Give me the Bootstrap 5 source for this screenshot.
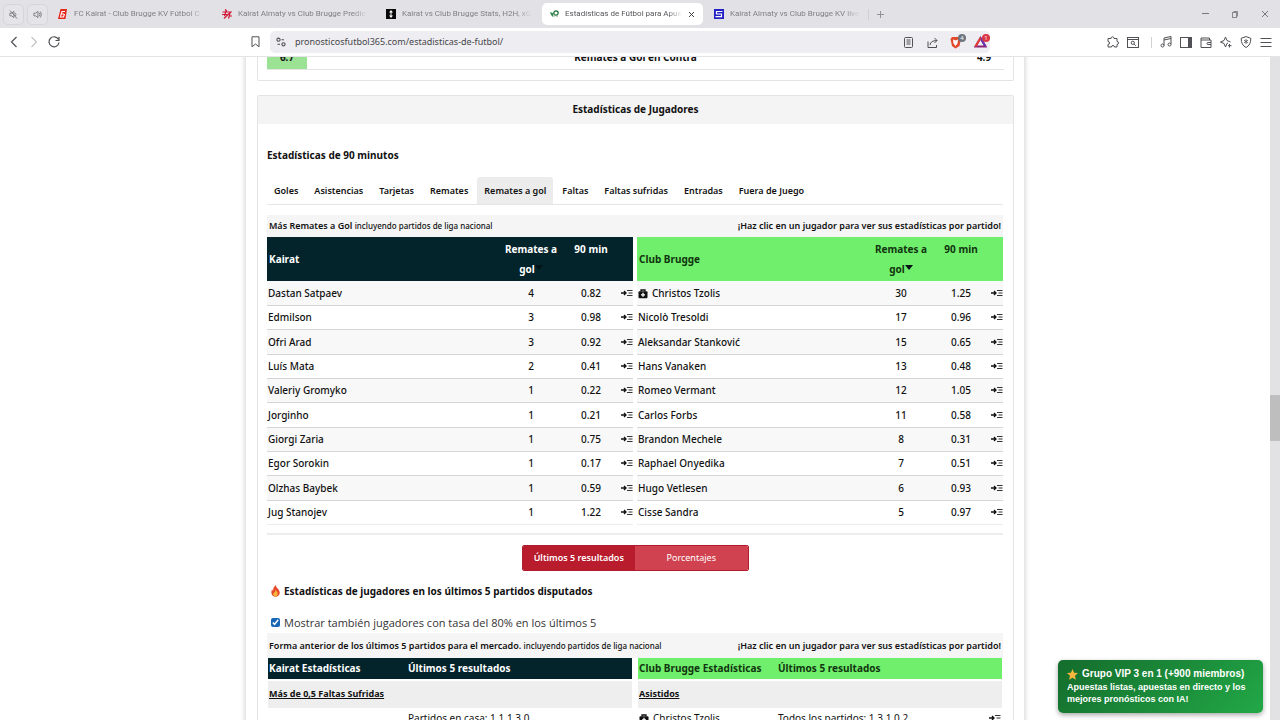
<!DOCTYPE html>
<html lang="es">
<head>
<meta charset="utf-8">
<meta name="viewport" content="width=device-width, initial-scale=1">
<title>Estadísticas de Fútbol para Apuestas</title>
<link href="https://cdn.jsdelivr.net/npm/bootstrap@5.3.0/dist/css/bootstrap.min.css" rel="stylesheet">
<style>
  body { font-family: "Noto Sans", "Open Sans", sans-serif; font-size: 10px; line-height: 20px; color: #111; background: #fff; }
  button { font-family: inherit; }
  svg { display: block; flex: none; }

  /* browser frame */
  .tab-strip { height: 28px; background: #e2e1e6; font-family: Roboto, sans-serif; font-size: 8px; color: #808086; }
  .sound-btn { width: 21px; height: 21px; border: 1px solid #d6d5da; border-radius: 5px; background: #e5e4e8; margin-left: 3px; padding: 0; color: #77777c; }
  .tab-item { width: 164px; padding: 0 8px 0 10px; gap: 6px; height: 22px; color: inherit; text-decoration: none; }
  .tab-item.current { width: 161px; margin: 0 1px 0 2px; padding-left: 8px; background: #fff; border-radius: 5px; color: #55555a; }
  .tab-name { flex: 1; overflow: hidden; white-space: nowrap; -webkit-mask-image: linear-gradient(90deg, #000 88%, transparent); mask-image: linear-gradient(90deg, #000 88%, transparent); }
  .plain { border: 0; background: none; padding: 0; color: inherit; display: flex; align-items: center; justify-content: center; }
  .win-btn { width: 30px; height: 22px; }
  .split { width: 1px; height: 11px; background: #d0cfd4; }
  .tool-row { height: 29px; background: #fff; border-bottom: 1px solid #e4e4e6; color: #505055; }
  .tool-btn { width: 20px; height: 20px; flex: none; }
  .save-btn { margin-left: 181px; margin-right: 5px; }
  .address { height: 22px; background: #eeedf1; border-radius: 5px; padding-left: 2px; min-width: 0; }
  .address input { border: 0; background: none; font-size: 9px; color: #46464b; outline: 0; padding: 0 0 0 5px; min-width: 0; }
  .tool-group { width: 290px; flex: none; }
  .count-dot { position: absolute; top: 2px; right: 0; width: 8px; height: 8px; border-radius: 50%; font-size: 6px; line-height: 8px; color: #fff; }

  /* page */
  .scroller { flex: 1; min-height: 0; }
  .track { width: 10px; background: #e2e2e4; }
  .thumb { height: 46px; margin-top: 338px; background: #bebebe; }
  .shell { width: 100%; max-width: 780px; margin-top: -13px; padding: 0 10px 0 11px; border: solid #e6e6e6; border-width: 0 1px; box-shadow: 0 0 5px rgba(0,0,0,.18); }
  .panel { border: 1px solid #e4e4e4; border-radius: 2px; }
  .summary { padding: 0 9px 10px; margin-bottom: 14px; }
  .summary .line { height: 26px; line-height: 26px; border-bottom: 1px solid #e4e4e4; }
  .green-cell { width: 40px; background: #9be294; }
  .panel-title { height: 28px; line-height: 26px; background: #f4f4f4; font-weight: 700; }
  .panel-main { padding: 21px 10px 0 9px; }
  .sub-title { font-size: 10px; line-height: 20px; font-weight: 700; margin: 0; }
  .market-tabs { margin-top: 12px; gap: 2px; height: 28px; border-bottom: 1px solid #e6e6e6; font-size: 9px; font-weight: 600; }
  .market-tabs .nav-link { color: #111; padding: 0 7px; line-height: 27px; height: 27px; border-radius: 3px 3px 0 0; }
  .market-tabs .nav-link.active { background: #ececec; }
  .caption-row { background: #f5f5f5; height: 22px; line-height: 22px; font-size: 9px; padding: 0 2px; font-weight: 600; }
  .caption-row.first { margin-top: 10px; }
  .caption-row.tall { height: 25px; line-height: 25px; }
  .caption-row small { font-size: 8px; font-weight: 500; }
  .pair { display: grid; grid-template-columns: 1fr 1fr; column-gap: 4px; }
  .pair.inset { column-gap: 6px; padding: 0 1px; }
  .stats { width: 100%; table-layout: fixed; border-collapse: collapse; }
  .stats th { padding: 0 2px; height: 44px; line-height: 20px; font-weight: 700; background: #03242b; color: #fff; }
  .stats .c { width: 60px; text-align: center; }
  .stats th.c { padding: 2px 2px; vertical-align: top; }
  .stats .go { width: 12px; padding: 0; }
  .stats td { height: 24px; padding: 0 1px; line-height: 22px; font-weight: 500; border-bottom: 1px solid #d6d6d6; }
  .stats tr:nth-child(3n) td { height: 25px; }
  .stats tbody tr:nth-child(odd) { background: #f8f8f8; }
  .stats tbody tr:last-child td { border-color: #ededed; }
  .stats.away th { background: #70ef6c; color: #10350f; }
  .caret { display: inline-block; border: 4px solid transparent; border-top: 5px solid #061316; border-bottom: 0; vertical-align: 3px; }
  .rule { height: 2px; background: #ececec; margin: 8px 0 10px; }
  .switch { width: 227px; height: 26px; border: 1px solid #b01d2c; border-radius: 2px; overflow: hidden; margin: 10px auto; }
  .switch button { flex: 1; border: 0; background: #d0424f; color: #fff; font-size: 9px; line-height: 24px; padding: 0; }
  .switch .on { background: #b91c2c; font-weight: 600; }
  .rate-label { font-family: "Open Sans", sans-serif; font-size: 11px; color: #333; }
  .rate-label input { width: 9px; height: 9px; margin: 0; accent-color: #1767b5; }
  .form { width: 100%; table-layout: fixed; border-collapse: separate; border-spacing: 0; }
  .form td { padding: 0 1px; }
  .form th { background: #03242b; color: #fff; font-weight: 700; padding: 0 1px; height: 21px; line-height: 21px; }
  .form .market { background: #eee; font-size: 9px; font-weight: 700; height: 29px; text-decoration: underline; border-top: 2px solid #fff; }
  .form.away th { background: #70ef6c; color: #10350f; }
  .form .name-col { width: 139px; }
  .form .icon-col { width: 14px; }
  .promo { position: absolute; right: 17px; bottom: 7px; width: 205px; padding: 7px 9px 8px; border-radius: 5px; color: #fff; text-decoration: none; background: linear-gradient(135deg, #146c2c, #22a847); box-shadow: 0 2px 5px rgba(0,0,0,.35); font: bold 9px/12px "Liberation Sans", sans-serif; }
  .promo:hover { color: #fff; }
  .promo strong { font-size: 10px; line-height: 14px; }
</style>
</head>
<body class="d-flex flex-column vh-100 overflow-hidden">

<svg width="0" height="0" class="position-absolute" aria-hidden="true">
  <symbol id="go" viewBox="0 0 12 8"><path d="M0 4h4.500M3 2l2 2-2 2" fill="none" stroke="#111" stroke-width="1.300"/><path d="M6 1.500h5.500M7.500 4h4M6 6.500h5.500" stroke="#333" stroke-width="1"/></symbol>
  <symbol id="kit" viewBox="0 0 10 10"><path d="M3 2.500V1h4v1.500" fill="none" stroke="#111" stroke-width="1.300"/><rect x=".5" y="2.300" width="9" height="7" rx="1" fill="#111"/><path d="M5 3.800v4M3 5.800h4" stroke="#fff" stroke-width="1.300"/></symbol>
</svg>

<header>
  <div class="tab-strip d-flex align-items-center">
    <button class="sound-btn d-flex align-items-center justify-content-center" aria-label="Pestaña silenciada"><svg width="9" height="9" viewBox="0 0 10 10" fill="none" stroke="currentColor"><path d="M1 3.500h2L5.500 1.500v7L3 6.500H1zM7 3.500q1.500 1.500 0 3M1 .5l8 9" /></svg></button>
    <button class="sound-btn d-flex align-items-center justify-content-center" aria-label="Pestaña con sonido"><svg width="9" height="9" viewBox="0 0 10 10" fill="none" stroke="currentColor"><path d="M1 3.500h2L5.500 1.500v7L3 6.500H1zM7 3q1.500 2 0 4M8.300 1.800q2 3.200 0 6.400" /></svg></button>
    <a href="#" class="tab-item d-flex align-items-center ms-0"><svg width="10" height="10" viewBox="0 0 10 10"><path d="M2.500 0H9L7.500 10H0z" fill="#e5271d"/><path d="M7 2.500H4L3.200 5H6M3.200 5L2.500 8h3l1-3" fill="none" stroke="#fff" stroke-width="1.100"/></svg><span class="tab-name">FC Kairat - Club Brugge KV Fútbol C</span></a>
    <a href="#" class="tab-item d-flex align-items-center"><svg width="10" height="10" viewBox="0 0 10 10" fill="none" stroke="#d31736" stroke-width="1.200"><path d="M3 .5l2 1.500M.5 3H9L6 5.500M0 5.500h6L2 9.500M4 2L2.500 7M8 4.500L6.500 9.500M7 7h3"/></svg><span class="tab-name">Kairat Almaty vs Club Brugge Predic</span></a>
    <a href="#" class="tab-item d-flex align-items-center"><svg width="10" height="10" viewBox="0 0 10 10"><rect width="10" height="10" fill="#080808"/><path d="M5 1l2 2.500H5.500v3H7L5 9 3 6.500h1.500v-3H3z" fill="#fff"/></svg><span class="tab-name">Kairat vs Club Brugge Stats, H2H, xG</span></a>
    <a href="#" class="tab-item current d-flex align-items-center"><svg width="9" height="10" viewBox="0 0 9 10"><path d="M0 3l3 1v4L1 6z" fill="#38864a"/><circle cx="6" cy="4" r="2.200" fill="none" stroke="#176c2e" stroke-width="1.200"/><path d="M4 5v3M7 6v2" stroke="#7fa98a"/></svg><span class="tab-name">Estadísticas de Fútbol para Apue</span><svg width="7" height="7" viewBox="0 0 7 7"><path d="M1 1l5 5M6 1L1 6" stroke="#444"/></svg></a>
    <a href="#" class="tab-item d-flex align-items-center"><svg width="10" height="10" viewBox="0 0 10 10"><rect width="10" height="10" fill="#2222c4"/><path d="M8.500 2.500h-6V5h5v2.700h-6" fill="none" stroke="#fff" stroke-width="1.200"/></svg><span class="tab-name">Kairat Almaty vs Club Brugge KV live</span></a>
    <span class="split"></span>
    <button class="plain ms-2" aria-label="Nueva pestaña"><svg width="7" height="7" viewBox="0 0 7 7"><path d="M3.500 0v7M0 3.500h7" stroke="#929297"/></svg></button>
    <div class="d-flex ms-auto">
      <button class="plain win-btn" aria-label="Minimizar"><svg width="8" height="8" viewBox="0 0 8 8"><path d="M1 3.500h7" stroke="#77777c"/></svg></button>
      <button class="plain win-btn" aria-label="Restaurar"><svg width="8" height="8" viewBox="0 0 8 8" fill="none" stroke="#88888d"><rect x="1.500" y="2.500" width="4" height="5"/><path d="M2.500 1.500h4v5"/></svg></button>
      <button class="plain win-btn" aria-label="Cerrar"><svg width="8" height="8" viewBox="0 0 8 8"><path d="M1 1l6 6M7 1L1 7" stroke="#77777c"/></svg></button>
    </div>
  </div>

  <div class="tool-row d-flex align-items-center">
    <button class="plain tool-btn ms-1" aria-label="Atrás"><svg width="8" height="12" viewBox="0 0 8 12"><path d="M6.500 1L1.500 6l5 5" fill="none" stroke="currentColor" stroke-width="1.200"/></svg></button>
    <button class="plain tool-btn" aria-label="Adelante"><svg width="8" height="12" viewBox="0 0 8 12"><path d="M1.500 1l5 5-5 5" fill="none" stroke="#c2c2c6" stroke-width="1.200"/></svg></button>
    <button class="plain tool-btn" aria-label="Recargar"><svg width="12" height="12" viewBox="0 0 12 12"><path d="M10.500 3.500A5 5 0 1 0 11 6.500M11 .8v3.700H7.500" fill="none" stroke="currentColor" stroke-width="1.200"/></svg></button>
    <button class="plain tool-btn save-btn" aria-label="Guardar"><svg width="9" height="12" viewBox="0 0 9 12"><path d="M1 .8h7v10L4.500 8 1 10.800z" fill="none" stroke="currentColor"/></svg></button>
    <div class="address d-flex align-items-center flex-grow-1">
      <svg class="ms-1 me-1" width="10" height="10" viewBox="0 0 10 10" fill="none" stroke="currentColor" stroke-width="1.100"><circle cx="2.500" cy="2.700" r="1.600"/><path d="M5.500 2.700H8M1.500 7.300H4"/><circle cx="7.500" cy="7.300" r="1.600"/></svg>
      <input class="flex-grow-1" type="text" aria-label="Dirección" value="pronosticosfutbol365.com/estadisticas-de-futbol/">
      <button class="plain tool-btn" aria-label="Lectura"><svg width="9" height="11" viewBox="0 0 9 11" fill="none" stroke="currentColor"><rect x=".5" y=".5" width="8" height="10" rx="1"/><path d="M2.500 3h4M2.500 5h4M2.500 7h4"/></svg></button>
      <button class="plain tool-btn ms-1" aria-label="Compartir"><svg width="11" height="11" viewBox="0 0 11 11" fill="none" stroke="currentColor"><path d="M1 4.500v6h8.500V8M3 8q.5-4.500 7-4.500M7.500 1L10 3.500 7.500 6"/></svg></button>
      <button class="plain tool-btn ms-1 position-relative" aria-label="Escudos"><svg width="12" height="13" viewBox="0 0 12 13"><path d="M2 1h7l2 2-1.500 7L5.500 12.500 2 10 .5 3z" fill="#e24a2b"/><path d="M3 3.500l2.500 1 2.500-1-.5 4L5.500 10l-2-2.500z" fill="#fff"/></svg><span class="count-dot bg-secondary">4</span></button>
      <button class="plain tool-btn ms-1 position-relative" aria-label="Recompensas"><svg width="13" height="12" viewBox="0 0 13 12"><path d="M6.500 2L1.500 10.500h10z" fill="none" stroke="#8b2474" stroke-width="2"/><path d="M6.500 2l5 8.500" stroke="#6234ad" stroke-width="2"/><path d="M6.500 2l-5 8.500" stroke="#e33e31" stroke-width="2"/></svg><span class="count-dot bg-danger">1</span></button>
    </div>
    <div class="tool-group d-flex align-items-center justify-content-end">
      <button class="plain tool-btn" aria-label="Extensiones"><svg width="12" height="12" viewBox="0 0 12 12"><path d="M1 2.500h3Q4 .8 5.500.8T7 2.500h3v3q1.500 0 1.500 1.500T10 8.500V11H7.500Q7.500 9.500 6 9.500T4.500 11H1V8.500q1.500 0 1.500-1.500T1 5.500z" fill="none" stroke="currentColor"/></svg></button>
      <button class="plain tool-btn" aria-label="Buscar en pestañas"><svg width="12" height="11" viewBox="0 0 12 11" fill="none" stroke="currentColor"><rect x=".5" y=".5" width="11" height="10"/><path d="M.5 2.500h11M7.200 7.200l1.600 1.600"/><circle cx="5.800" cy="5.800" r="1.600"/></svg></button>
      <span class="split ms-2 me-1"></span>
      <button class="plain tool-btn" aria-label="Música"><svg width="12" height="12" viewBox="0 0 12 12" fill="none" stroke="currentColor"><path d="M4 9.500V2l7-1.500V8M4 4l7-1.500"/><circle cx="2.500" cy="9.500" r="1.500"/><circle cx="9.500" cy="8.500" r="1.500"/></svg></button>
      <button class="plain tool-btn" aria-label="Panel lateral"><svg width="12" height="11" viewBox="0 0 12 11"><rect x=".5" y=".5" width="11" height="10" fill="none" stroke="currentColor"/><path d="M8 0h4v11H8z" fill="currentColor"/></svg></button>
      <button class="plain tool-btn" aria-label="Cartera"><svg width="12" height="11" viewBox="0 0 12 11" fill="none" stroke="currentColor"><path d="M9.500 3V1H1v9.500h10V3H1M11 5.500H8q-1 0-1 1t1 1h3"/></svg></button>
      <button class="plain tool-btn" aria-label="Leo"><svg width="12" height="12" viewBox="0 0 12 12" fill="none" stroke="currentColor"><path d="M8 7l-1 .5L5.500 11 4 7.500.5 6 4 4.500 5.500 1 7 4.500 10.500 6M9.500 8v3.500M8 9.700h3.500"/></svg></button>
      <button class="plain tool-btn" aria-label="VPN"><svg width="12" height="12" viewBox="0 0 12 12" fill="none" stroke="currentColor"><path d="M6 .6l4.800 1.700Q11 9 6 11.500 1 9 1.200 2.300z"/><path d="M6 3v5M4 4.200l4 2.600M8 4.200L4 6.800" stroke-width=".8"/></svg></button>
      <button class="plain tool-btn me-1" aria-label="Menú"><svg width="12" height="11" viewBox="0 0 12 11"><path d="M.5 1.500h11M.5 5.500h11M.5 9.500h11" stroke="currentColor"/></svg></button>
    </div>
  </div>
</header>

<div class="scroller d-flex position-relative overflow-hidden">
  <main class="flex-grow-1 d-flex justify-content-center align-items-start">
    <div class="shell">
      <section class="panel summary border-top-0">
        <div class="line d-flex fw-bold text-center">
          <span class="green-cell">6.7</span><span class="flex-grow-1">Remates a Gol en Contra</span><span class="green-cell bg-white">4.9</span>
        </div>
      </section>

      <section class="panel">
        <div class="panel-title text-center">Estadísticas de Jugadores</div>
        <div class="panel-main">
          <h2 class="sub-title">Estadísticas de 90 minutos</h2>
          <nav class="nav market-tabs flex-nowrap">
            <a class="nav-link" href="#">Goles</a><a class="nav-link" href="#">Asistencias</a><a class="nav-link" href="#">Tarjetas</a><a class="nav-link" href="#">Remates</a><a class="nav-link active" href="#">Remates a gol</a><a class="nav-link" href="#">Faltas</a><a class="nav-link" href="#">Faltas sufridas</a><a class="nav-link" href="#">Entradas</a><a class="nav-link" href="#">Fuera de Juego</a>
          </nav>
          <div class="caption-row first d-flex justify-content-between"><span>Más Remates a Gol <small>incluyendo partidos de liga nacional</small></span><span>¡Haz clic en un jugador para ver sus estadísticas por partido!</span></div>
          <div class="pair">
            <table class="stats">
              <thead><tr><th>Kairat</th><th class="c">Remates a gol<i class="caret"></i></th><th class="c">90 min</th><th class="go"></th></tr></thead>
              <tbody>
                <tr><td>Dastan Satpaev</td><td class="c">4</td><td class="c">0.82</td><td class="go"><svg width="12" height="8"><use href="#go"/></svg></td></tr>
                <tr><td>Edmilson</td><td class="c">3</td><td class="c">0.98</td><td class="go"><svg width="12" height="8"><use href="#go"/></svg></td></tr>
                <tr><td>Ofri Arad</td><td class="c">3</td><td class="c">0.92</td><td class="go"><svg width="12" height="8"><use href="#go"/></svg></td></tr>
                <tr><td>Luís Mata</td><td class="c">2</td><td class="c">0.41</td><td class="go"><svg width="12" height="8"><use href="#go"/></svg></td></tr>
                <tr><td>Valeriy Gromyko</td><td class="c">1</td><td class="c">0.22</td><td class="go"><svg width="12" height="8"><use href="#go"/></svg></td></tr>
                <tr><td>Jorginho</td><td class="c">1</td><td class="c">0.21</td><td class="go"><svg width="12" height="8"><use href="#go"/></svg></td></tr>
                <tr><td>Giorgi Zaria</td><td class="c">1</td><td class="c">0.75</td><td class="go"><svg width="12" height="8"><use href="#go"/></svg></td></tr>
                <tr><td>Egor Sorokin</td><td class="c">1</td><td class="c">0.17</td><td class="go"><svg width="12" height="8"><use href="#go"/></svg></td></tr>
                <tr><td>Olzhas Baybek</td><td class="c">1</td><td class="c">0.59</td><td class="go"><svg width="12" height="8"><use href="#go"/></svg></td></tr>
                <tr><td>Jug Stanojev</td><td class="c">1</td><td class="c">1.22</td><td class="go"><svg width="12" height="8"><use href="#go"/></svg></td></tr>
              </tbody>
            </table>
            <table class="stats away">
              <thead><tr><th>Club Brugge</th><th class="c">Remates a gol<i class="caret"></i></th><th class="c">90 min</th><th class="go"></th></tr></thead>
              <tbody>
                <tr><td><svg class="d-inline-block me-1" width="10" height="10"><use href="#kit"/></svg>Christos Tzolis</td><td class="c">30</td><td class="c">1.25</td><td class="go"><svg width="12" height="8"><use href="#go"/></svg></td></tr>
                <tr><td>Nicolò Tresoldi</td><td class="c">17</td><td class="c">0.96</td><td class="go"><svg width="12" height="8"><use href="#go"/></svg></td></tr>
                <tr><td>Aleksandar Stanković</td><td class="c">15</td><td class="c">0.65</td><td class="go"><svg width="12" height="8"><use href="#go"/></svg></td></tr>
                <tr><td>Hans Vanaken</td><td class="c">13</td><td class="c">0.48</td><td class="go"><svg width="12" height="8"><use href="#go"/></svg></td></tr>
                <tr><td>Romeo Vermant</td><td class="c">12</td><td class="c">1.05</td><td class="go"><svg width="12" height="8"><use href="#go"/></svg></td></tr>
                <tr><td>Carlos Forbs</td><td class="c">11</td><td class="c">0.58</td><td class="go"><svg width="12" height="8"><use href="#go"/></svg></td></tr>
                <tr><td>Brandon Mechele</td><td class="c">8</td><td class="c">0.31</td><td class="go"><svg width="12" height="8"><use href="#go"/></svg></td></tr>
                <tr><td>Raphael Onyedika</td><td class="c">7</td><td class="c">0.51</td><td class="go"><svg width="12" height="8"><use href="#go"/></svg></td></tr>
                <tr><td>Hugo Vetlesen</td><td class="c">6</td><td class="c">0.93</td><td class="go"><svg width="12" height="8"><use href="#go"/></svg></td></tr>
                <tr><td>Cisse Sandra</td><td class="c">5</td><td class="c">0.97</td><td class="go"><svg width="12" height="8"><use href="#go"/></svg></td></tr>
              </tbody>
            </table>
          </div>
          <div class="rule"></div>
          <div class="switch d-flex"><button class="on">Últimos 5 resultados</button><button>Porcentajes</button></div>
          <h2 class="sub-title d-flex align-items-center gap-1"><svg class="ms-1" width="9" height="12" viewBox="0 0 9 12"><path d="M4.500 0Q5 2.500 7.500 4.500 10 8 7.500 10.500 4.500 13 1.500 10.500-.5 8 1 4.500q.8.500 1 1.500Q2 2.500 4.500 0z" fill="#e5492b"/><path d="M4.700 4.500q.5 1.500 1.800 3 .8 3-2 4-3-1-2-3.500Q4.500 7 4.700 4.500z" fill="#fbb43a"/></svg><span>Estadísticas de jugadores en los últimos 5 partidos disputados</span></h2>
          <label class="rate-label d-flex align-items-center gap-1 mt-2 pt-1 ps-1"><input type="checkbox" checked><span>Mostrar también jugadores con tasa del 80% en los últimos 5</span></label>
          <div class="caption-row tall d-flex justify-content-between"><span>Forma anterior de los últimos 5 partidos para el mercado. <small>incluyendo partidos de liga nacional</small></span><span>¡Haz clic en un jugador para ver sus estadísticas por partido!</span></div>
          <div class="pair inset">
            <table class="form">
              <thead><tr><th class="name-col">Kairat Estadísticas</th><th>Últimos 5 resultados</th><th class="icon-col"></th></tr></thead>
              <tbody><tr><td class="market" colspan="3">Más de 0,5 Faltas Sufridas</td></tr>
              <tr><td></td><td>Partidos en casa: 1,1,1,3,0</td><td></td></tr></tbody>
            </table>
            <table class="form away">
              <thead><tr><th class="name-col">Club Brugge Estadísticas</th><th>Últimos 5 resultados</th><th class="icon-col"></th></tr></thead>
              <tbody><tr><td class="market" colspan="3">Asistidos</td></tr>
              <tr><td><svg class="d-inline-block me-1" width="10" height="10"><use href="#kit"/></svg>Christos Tzolis</td><td>Todos los partidos: 1,3,1,0,2</td><td><svg width="12" height="8"><use href="#go"/></svg></td></tr></tbody>
            </table>
          </div>
        </div>
      </section>
    </div>
  </main>
  <div class="track"><div class="thumb"></div></div>
  <a class="promo" href="#"><strong class="d-flex align-items-center gap-1"><svg width="11" height="11" viewBox="0 0 11 11"><path d="M5.500 0l1.600 3.700 3.900.4-3 2.700.9 4-3.400-2.100-3.400 2.100.9-4-3-2.700 3.900-.4z" fill="#f8b73c"/></svg><span>Grupo VIP 3 en 1 (+900 miembros)</span></strong>Apuestas listas, apuestas en directo y los mejores pronósticos con IA!</a>
</div>

<script src="https://cdn.jsdelivr.net/npm/bootstrap@5.3.0/dist/js/bootstrap.bundle.min.js"></script>
</body>
</html>
